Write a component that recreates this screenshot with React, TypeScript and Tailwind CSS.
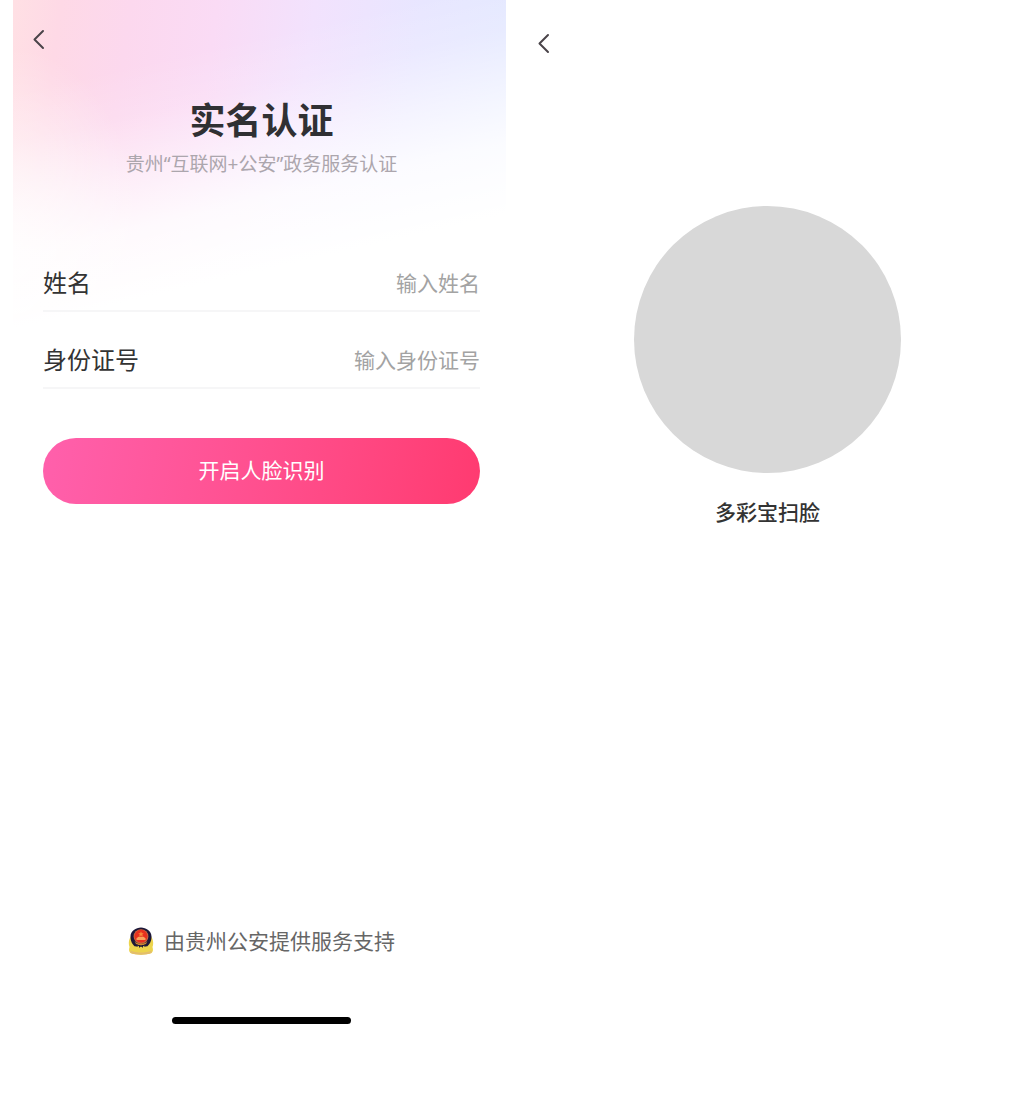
import { ReactNode } from 'react';

interface FieldProps {
  id: string;
  label: string;
  placeholder: string;
}

function BackButton() {
  return (
    <button type="button" aria-label="返回" className="block h-6 w-6 text-[#4a4449]">
      <svg
        className="h-6 w-6"
        viewBox="0 0 24 24"
        fill="none"
        stroke="currentColor"
        strokeWidth="2"
        strokeLinecap="round"
        strokeLinejoin="round"
        aria-hidden="true"
      >
        <path d="M16 4 L7.5 12.5 L16 21" />
      </svg>
    </button>
  );
}

function Field({ id, label, placeholder }: FieldProps) {
  return (
    <div className="flex h-[77px] items-end border-b-2 border-[#f6f6f7] pb-[11px]">
      <label htmlFor={id} className="shrink-0 text-2xl text-[#333]">
        {label}
      </label>
      <input
        id={id}
        type="text"
        placeholder={placeholder}
        className="h-8 min-w-0 flex-1 bg-transparent text-right text-[21px] text-[#333] outline-none placeholder:text-[#a3a3a3]"
      />
    </div>
  );
}

function PoliceBadge() {
  return (
    <svg className="h-7 w-[26px] shrink-0" viewBox="0 0 26 28" aria-hidden="true">
      {/* Gold base */}
      <path
        d="M4 8 C1 11 0 16 1.5 20 C0.8 22.5 0.8 24.8 2.5 26 C8 28.2 18 28.2 23.5 26 C25.2 24.8 25.2 22.5 24.5 20 C26 16 25 11 22 8 Z"
        fill="#ecd44c"
      />
      <path d="M2.5 23.5 C8 26.3 18 26.3 23.5 23.5 L23.5 26 C18 28.2 8 28.2 2.5 26 Z" fill="#e3bd6c" />
      {/* Navy shield */}
      <path
        d="M13 0.5 C18 0.5 23.5 4 23.5 9.5 C23.5 14.5 21.5 17.5 19 19.5 L16.5 18.8 L13 20 L9.5 18.8 L7 19.5 C4.5 17.5 2.5 14.5 2.5 9.5 C2.5 4 8 0.5 13 0.5 Z"
        fill="#1d1738"
      />
      {/* Emblem */}
      <circle cx="13" cy="9.6" r="7.4" fill="#c9683f" />
      <circle cx="13" cy="9.2" r="6.4" fill="#e8301f" />
      <path d="M13 4.2 L13.8 6.2 L15.8 6.3 L14.3 7.6 L14.8 9.5 L13 8.4 L11.2 9.5 L11.7 7.6 L10.2 6.3 L12.2 6.2 Z" fill="#f98a3a" />
      <path d="M8.5 11.2 L10.5 9.8 H15.5 L17.5 11.2 V13 H8.5 Z" fill="#f8a45e" />
      <path d="M6.5 14 C9 17.5 17 17.5 19.5 14 L18 17 C15 18.8 11 18.8 8 17 Z" fill="#c9862f" />
      <path d="M9 17.5 V20 M11.5 18 V20.5 M14.5 18 V20.5 M17 17.5 V20" stroke="#1d1738" strokeWidth="1" />
    </svg>
  );
}

function Screen({ children }: { children: ReactNode }) {
  return <section className="flex min-h-screen min-w-0 flex-col">{children}</section>;
}

function VerifyScreen() {
  return (
    <Screen>
      <div className="flex flex-1 flex-col bg-[radial-gradient(130px_200px_at_0%_75%,rgba(255,255,255,0.75),rgba(255,255,255,0)),linear-gradient(167deg,rgba(255,255,255,0)_90px,rgba(255,255,255,0.15)_140px,rgba(255,255,255,0.55)_200px,rgba(255,255,255,0.85)_250px,#fff_320px),linear-gradient(98deg,#ffe0e4_0%,#fed9e6_9%,#fcd8ee_22%,#fadbf5_38%,#f2e2fd_56%,#e8e6ff_76%,#e2e9ff_100%)] bg-[length:100%_330px] bg-no-repeat pb-[73px] pl-[30px] pr-[26px]">
        <header>
          <div className="-ml-4 pt-[27px]">
            <BackButton />
          </div>
          <h1 className="mt-[46px] text-center text-4xl leading-12 font-bold text-[#303033]">实名认证</h1>
          <p className="mt-[5px] text-center text-[19px] leading-7 text-[#aca6ad]">贵州“互联网+公安”政务服务认证</p>
        </header>

        <form className="mt-[57px]">
          <Field id="name" label="姓名" placeholder="输入姓名" />
          <Field id="id-number" label="身份证号" placeholder="输入身份证号" />
          <button
            type="button"
            className="mt-[49px] h-[66px] w-full rounded-full bg-linear-100 from-[#ff60ac] to-[#ff3a70] text-[21px] text-white"
          >
            开启人脸识别
          </button>
        </form>

        <footer className="mt-auto flex flex-col items-center">
          <div className="flex items-center gap-2.5 text-[21px] leading-8 text-[#666]">
            <PoliceBadge />
            <span>由贵州公安提供服务支持</span>
          </div>
          {/* Home indicator */}
          <div className="mt-[60px] h-[7px] w-[179px] rounded-full bg-black" />
        </footer>
      </div>
    </Screen>
  );
}

function FaceScanScreen() {
  return (
    <Screen>
      <div className="pt-[31px] pl-[26px]">
        <BackButton />
      </div>
      <div className="mt-[151px] flex flex-col items-center">
        <div className="h-[267px] w-[267px] rounded-full bg-[#d8d8d8]" />
        <p className="mt-[23px] text-[21px] leading-8 font-medium text-[#333]">多彩宝扫脸</p>
      </div>
    </Screen>
  );
}

export default function App() {
  return (
    <main className="grid min-h-screen grid-cols-[493fr_523fr] bg-white pr-[3px] pl-[13px] font-['Noto_Sans','Noto_Sans_CJK_SC',sans-serif]">
      <VerifyScreen />
      <FaceScanScreen />
    </main>
  );
}
